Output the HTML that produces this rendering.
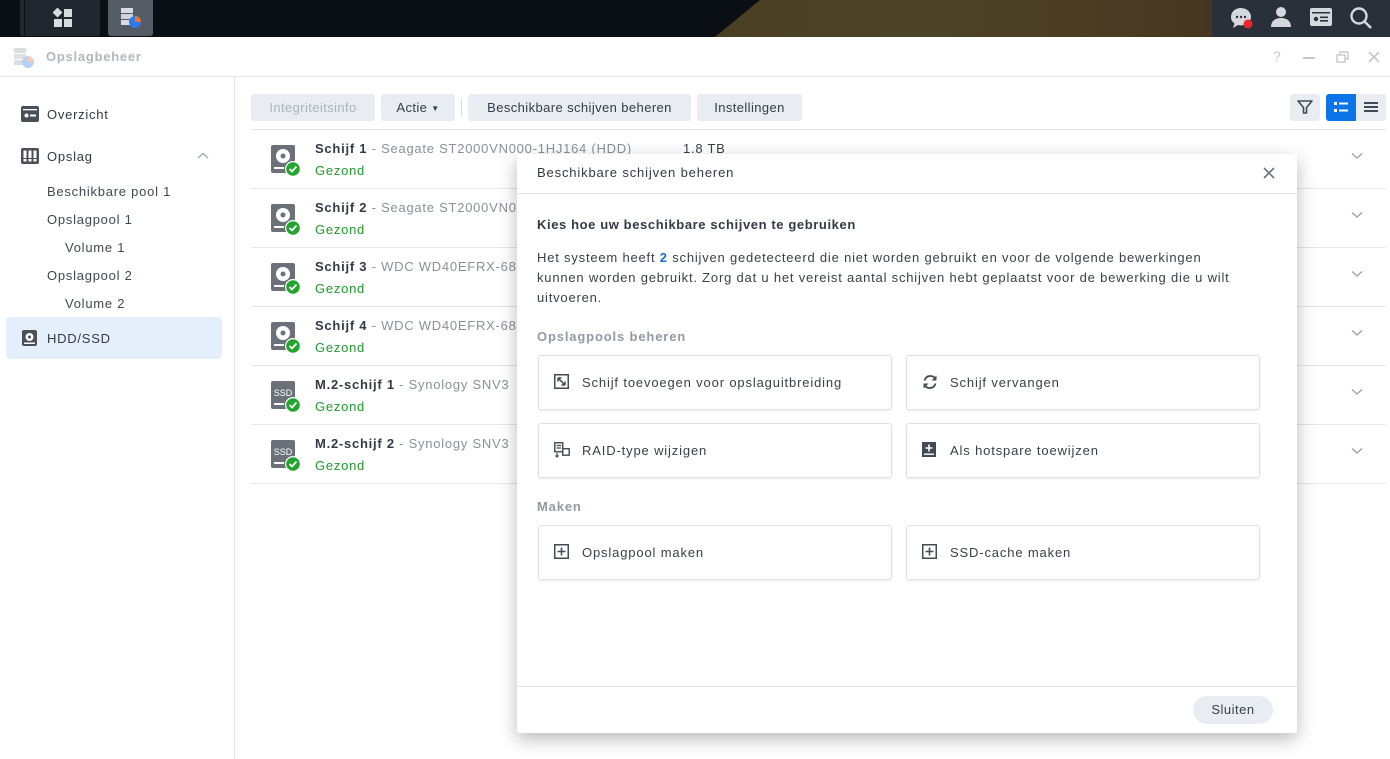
<!DOCTYPE html>
<html><head><meta charset="utf-8"><style>
*{box-sizing:border-box;margin:0;padding:0}
body{width:1390px;height:759px;overflow:hidden;font-family:"Liberation Sans",sans-serif;font-size:13px;color:#3a3f47;background:#fff;position:relative;letter-spacing:.75px}
.top{position:absolute;left:0;top:0;width:1390px;height:37px;background:#0a0e15}
.wall{position:absolute;left:715px;top:0;width:497px;height:37px;background:linear-gradient(90deg,#4a3f22,#4d4428 40%,#4a3c24 80%,#45361f);clip-path:polygon(45px 0,100% 0,100% 100%,0 100%)}
.tb{position:absolute;top:0;height:36px;border-radius:0 0 3px 3px}
.abs{position:absolute}
.side div{position:absolute;left:47px;font-size:13px;color:#414751}
.row{position:absolute;left:251px;width:1135px;height:59px;border-bottom:1px solid #e3e6ea}
.row .t{position:absolute;left:64px;top:11px;font-size:13px;white-space:nowrap}
.row b{color:#333a44}
.row .m{color:#8a9099}
.row .g{position:absolute;left:64px;top:33px;color:#1f9a2a;font-size:13px}
.row .ic{position:absolute;left:20px;top:15px}
.row .chev{position:absolute;left:1100px;top:22px}
.btn{position:absolute;top:94px;height:27px;background:#e9edf2;border-radius:3px;font-size:13px;line-height:27px;text-align:center;color:#353b44;letter-spacing:.4px}
.modal{position:absolute;left:517px;top:154px;width:780px;height:579px;background:#fff;box-shadow:0 6px 18px rgba(0,0,0,.28);border-radius:2px;letter-spacing:.85px}
.card{position:absolute;width:354px;height:55px;border:1px solid #dde1e6;border-radius:3px;box-shadow:0 1px 2px rgba(0,0,0,.08);font-size:13px;color:#3a3f47}
.card span{position:absolute;left:43px;top:19px}
.card svg{position:absolute;left:15px;top:18px}
</style></head><body>
<div class="top"></div>
<div class="wall"></div>
<div class="tb" style="left:20px;width:80px;background:#22272f"></div>
<div class="abs" style="left:24px;top:0;width:1px;height:36px;background:#0e1218"></div>
<svg class="abs" style="left:53px;top:8px" width="20" height="20"><rect x="1" y="1" width="7" height="7" transform="rotate(45 4.5 4.5)" fill="#d8dbe0"/><rect x="11" y="1" width="8" height="8" fill="#d8dbe0"/><rect x="1" y="11" width="8" height="8" fill="#d8dbe0"/><rect x="11" y="11" width="8" height="8" fill="#d8dbe0"/></svg>
<div class="tb" style="left:108px;width:45px;background:#555b64"></div>
<svg class="abs" style="left:119px;top:6px" width="24" height="24"><rect x="2" y="2" width="12" height="5" fill="#d8dbe0"/><rect x="2" y="8" width="12" height="5" fill="#cfd3d8"/><rect x="2" y="14" width="12" height="5" fill="#d8dbe0"/><circle cx="16" cy="16" r="6" fill="#2d7be6"/><path d="M16 16V10A6 6 0 0 1 22 16Z" fill="#f07030"/></svg>
<div class="abs" style="left:1212px;top:0;width:178px;height:37px;background:#2a3039"></div>
<svg class="abs" style="left:1229px;top:6px" width="26" height="24"><path d="M12 2C6 2 2 6 2 11c0 3 1.5 5 3.5 6.5L4 22l5-3c1 .3 2 .4 3 .4 6 0 10-4 10-8.5S18 2 12 2z" fill="#d5d8dc"/><circle cx="8" cy="11" r="1.2" fill="#2a3039"/><circle cx="12" cy="11" r="1.2" fill="#2a3039"/><circle cx="16" cy="11" r="1.2" fill="#2a3039"/><circle cx="19" cy="18" r="4.5" fill="#e8262c"/></svg>
<svg class="abs" style="left:1270px;top:6px" width="22" height="22"><circle cx="11" cy="6" r="5" fill="#d5d8dc"/><path d="M1 21c0-6 4-9 10-9s10 3 10 9z" fill="#d5d8dc"/></svg>
<svg class="abs" style="left:1309px;top:7px" width="24" height="20"><rect x="1" y="1" width="22" height="18" rx="2" fill="#d5d8dc"/><rect x="3" y="5" width="18" height="1.5" fill="#2a3039"/><circle cx="7" cy="12" r="2.2" fill="#2a3039"/><rect x="11" y="9.5" width="8" height="1.6" fill="#2a3039"/><rect x="11" y="13" width="8" height="1.6" fill="#2a3039"/></svg>
<svg class="abs" style="left:1349px;top:6px" width="24" height="24"><circle cx="10" cy="10" r="7.5" fill="none" stroke="#d5d8dc" stroke-width="2.4"/><path d="M15.5 15.5L22 22" stroke="#d5d8dc" stroke-width="2.6"/></svg>

<div class="abs" style="left:0;top:37px;width:1390px;height:40px;border-bottom:1px solid #e2e5e9;background:#fff"></div>
<svg class="abs" style="left:12px;top:46px" width="24" height="24" opacity=".45"><rect x="2" y="2" width="12" height="5" fill="#b0b5bc"/><rect x="2" y="8" width="12" height="5" fill="#b8bdc3"/><rect x="2" y="14" width="12" height="5" fill="#b0b5bc"/><circle cx="16" cy="16" r="6" fill="#5a9be9"/><path d="M16 16V10A6 6 0 0 1 22 16Z" fill="#f09060"/></svg>
<div class="abs" style="left:46px;top:49px;font-weight:bold;color:#b3b7bd;font-size:13px">Opslagbeheer</div>
<div class="abs" style="left:1273px;top:48px;color:#c4c8cd;font-size:14px">?</div>
<div class="abs" style="left:1303px;top:57px;width:12px;height:1.5px;background:#c4c8cd"></div>
<svg class="abs" style="left:1336px;top:51px" width="13" height="12"><rect x="1" y="4" width="8" height="7" fill="none" stroke="#c4c8cd" stroke-width="1.4"/><path d="M4 4V1h8v7H9" fill="none" stroke="#c4c8cd" stroke-width="1.4"/></svg>
<svg class="abs" style="left:1368px;top:51px" width="12" height="12"><path d="M1 1L11 11M11 1L1 11" stroke="#c4c8cd" stroke-width="1.6"/></svg>

<div class="abs" style="left:234px;top:77px;width:1px;height:682px;background:#e2e5e9"></div>
<svg class="abs" style="left:21px;top:106px" width="18" height="16"><rect x="0" y="0" width="18" height="16" rx="2" fill="#4a5059"/><rect x="2" y="3" width="14" height="1.3" fill="#fff"/><circle cx="5.5" cy="9.5" r="2" fill="#fff"/><rect x="9" y="8.5" width="6" height="2" fill="#fff"/></svg>
<div class="abs" style="left:47px;top:107px;color:#333a44">Overzicht</div>
<svg class="abs" style="left:21px;top:148px" width="18" height="16"><rect x="0" y="0" width="18" height="16" rx="2" fill="#4a5059"/><rect x="2.5" y="2.5" width="3" height="11" fill="#fff"/><rect x="7.5" y="2.5" width="3" height="11" fill="#fff"/><rect x="12.5" y="2.5" width="3" height="11" fill="#fff"/><rect x="2.5" y="10" width="13" height="1" fill="#4a5059"/></svg>
<div class="abs" style="left:47px;top:149px;color:#333a44">Opslag</div>
<svg class="abs" style="left:197px;top:152px" width="12" height="8"><path d="M1 6L6 1.5L11 6" fill="none" stroke="#a0a6ad" stroke-width="1.3"/></svg>
<div class="side">
<div style="top:184px">Beschikbare pool 1</div>
<div style="top:212px">Opslagpool 1</div>
<div style="top:240px;left:65px">Volume 1</div>
<div style="top:268px">Opslagpool 2</div>
<div style="top:296px;left:65px">Volume 2</div>
</div>
<div class="abs" style="left:6px;top:317px;width:216px;height:42px;background:#e4effb;border-radius:4px"></div>
<svg class="abs" style="left:22px;top:330px" width="15" height="16"><rect x="0" y="0" width="15" height="16" rx="2" fill="#4a5059"/><circle cx="7.5" cy="7" r="4" fill="#fff"/><circle cx="7.5" cy="7" r="1.5" fill="#4a5059"/><rect x="2" y="12.5" width="11" height="1.5" fill="#fff"/></svg>
<div class="abs" style="left:47px;top:331px;color:#333a44">HDD/SSD</div>

<div class="btn" style="left:251px;width:124px;color:#aeb3ba">Integriteitsinfo</div>
<div class="btn" style="left:381px;width:74px">Actie <span style="font-size:8px;vertical-align:1px">▼</span></div>
<div class="abs" style="left:461px;top:98px;width:1px;height:19px;background:#d8dce1"></div>
<div class="btn" style="left:468px;width:223px">Beschikbare schijven beheren</div>
<div class="btn" style="left:697px;width:105px">Instellingen</div>
<div class="btn" style="left:1290px;width:30px"></div>
<svg class="abs" style="left:1297px;top:99px" width="16" height="16"><path d="M1 2h14L9.5 8.5V14h-3V8.5z" fill="none" stroke="#444a53" stroke-width="1.6" stroke-linejoin="round"/></svg>
<div class="btn" style="left:1326px;width:60px"></div>
<div class="abs" style="left:1326px;top:94px;width:30px;height:27px;background:#0a74e8;border-radius:3px 0 0 3px"></div>
<svg class="abs" style="left:1333px;top:100px" width="16" height="14"><rect x="1" y="2" width="3" height="3" fill="#fff"/><rect x="6" y="2.5" width="9" height="2" fill="#fff"/><rect x="1" y="9" width="3" height="3" fill="#fff"/><rect x="6" y="9.5" width="9" height="2" fill="#fff"/></svg>
<svg class="abs" style="left:1364px;top:101px" width="14" height="12"><rect x="0" y="1" width="14" height="2" fill="#444a53"/><rect x="0" y="5" width="14" height="2" fill="#444a53"/><rect x="0" y="9" width="14" height="2" fill="#444a53"/></svg>
<div class="abs" style="left:251px;top:129px;width:1135px;height:1px;background:#dfe3e7"></div>

<div class="row" style="top:130px"><svg class="ic" width="30" height="32"><rect x="0" y="0" width="24" height="28" rx="2" fill="#6b7079"/><circle cx="12" cy="11" r="7" fill="#fff"/><circle cx="12" cy="11" r="2.5" fill="#6b7079"/><rect x="3" y="22" width="10" height="2" fill="#fff"/><circle cx="22" cy="24" r="8" fill="#fff"/><circle cx="22" cy="24" r="6.8" fill="#22a52e"/><path d="M18.5 24l2.5 2.5 4.5-5" fill="none" stroke="#fff" stroke-width="1.8"/></svg><div class="t"><b>Schijf 1</b> <span class="m">- Seagate ST2000VN000-1HJ164 (HDD)</span><span style="position:absolute;left:368px;color:#3a3f47">1.8 TB</span></div><div class="g">Gezond</div><svg class="chev" width="12" height="8"><path d="M1 1.5L6 6l5-4.5" fill="none" stroke="#9aa0a7" stroke-width="1.3"/></svg></div>
<div class="row" style="top:189px"><svg class="ic" width="30" height="32"><rect x="0" y="0" width="24" height="28" rx="2" fill="#6b7079"/><circle cx="12" cy="11" r="7" fill="#fff"/><circle cx="12" cy="11" r="2.5" fill="#6b7079"/><rect x="3" y="22" width="10" height="2" fill="#fff"/><circle cx="22" cy="24" r="8" fill="#fff"/><circle cx="22" cy="24" r="6.8" fill="#22a52e"/><path d="M18.5 24l2.5 2.5 4.5-5" fill="none" stroke="#fff" stroke-width="1.8"/></svg><div class="t"><b>Schijf 2</b> <span class="m">- Seagate ST2000VN0</span></div><div class="g">Gezond</div><svg class="chev" width="12" height="8"><path d="M1 1.5L6 6l5-4.5" fill="none" stroke="#9aa0a7" stroke-width="1.3"/></svg></div>
<div class="row" style="top:248px"><svg class="ic" width="30" height="32"><rect x="0" y="0" width="24" height="28" rx="2" fill="#6b7079"/><circle cx="12" cy="11" r="7" fill="#fff"/><circle cx="12" cy="11" r="2.5" fill="#6b7079"/><rect x="3" y="22" width="10" height="2" fill="#fff"/><circle cx="22" cy="24" r="8" fill="#fff"/><circle cx="22" cy="24" r="6.8" fill="#22a52e"/><path d="M18.5 24l2.5 2.5 4.5-5" fill="none" stroke="#fff" stroke-width="1.8"/></svg><div class="t"><b>Schijf 3</b> <span class="m">- WDC WD40EFRX-68</span></div><div class="g">Gezond</div><svg class="chev" width="12" height="8"><path d="M1 1.5L6 6l5-4.5" fill="none" stroke="#9aa0a7" stroke-width="1.3"/></svg></div>
<div class="row" style="top:307px"><svg class="ic" width="30" height="32"><rect x="0" y="0" width="24" height="28" rx="2" fill="#6b7079"/><circle cx="12" cy="11" r="7" fill="#fff"/><circle cx="12" cy="11" r="2.5" fill="#6b7079"/><rect x="3" y="22" width="10" height="2" fill="#fff"/><circle cx="22" cy="24" r="8" fill="#fff"/><circle cx="22" cy="24" r="6.8" fill="#22a52e"/><path d="M18.5 24l2.5 2.5 4.5-5" fill="none" stroke="#fff" stroke-width="1.8"/></svg><div class="t"><b>Schijf 4</b> <span class="m">- WDC WD40EFRX-68</span></div><div class="g">Gezond</div><svg class="chev" width="12" height="8"><path d="M1 1.5L6 6l5-4.5" fill="none" stroke="#9aa0a7" stroke-width="1.3"/></svg></div>
<div class="row" style="top:366px"><svg class="ic" width="30" height="32"><rect x="0" y="0" width="24" height="28" rx="2" fill="#6b7079"/><text x="12" y="15" font-size="9" fill="#fff" text-anchor="middle" font-family="Liberation Sans" letter-spacing="0">SSD</text><rect x="3" y="22" width="10" height="2" fill="#fff"/><circle cx="22" cy="24" r="8" fill="#fff"/><circle cx="22" cy="24" r="6.8" fill="#22a52e"/><path d="M18.5 24l2.5 2.5 4.5-5" fill="none" stroke="#fff" stroke-width="1.8"/></svg><div class="t"><b>M.2-schijf 1</b> <span class="m">- Synology SNV3</span></div><div class="g">Gezond</div><svg class="chev" width="12" height="8"><path d="M1 1.5L6 6l5-4.5" fill="none" stroke="#9aa0a7" stroke-width="1.3"/></svg></div>
<div class="row" style="top:425px"><svg class="ic" width="30" height="32"><rect x="0" y="0" width="24" height="28" rx="2" fill="#6b7079"/><text x="12" y="15" font-size="9" fill="#fff" text-anchor="middle" font-family="Liberation Sans" letter-spacing="0">SSD</text><rect x="3" y="22" width="10" height="2" fill="#fff"/><circle cx="22" cy="24" r="8" fill="#fff"/><circle cx="22" cy="24" r="6.8" fill="#22a52e"/><path d="M18.5 24l2.5 2.5 4.5-5" fill="none" stroke="#fff" stroke-width="1.8"/></svg><div class="t"><b>M.2-schijf 2</b> <span class="m">- Synology SNV3</span></div><div class="g">Gezond</div><svg class="chev" width="12" height="8"><path d="M1 1.5L6 6l5-4.5" fill="none" stroke="#9aa0a7" stroke-width="1.3"/></svg></div>

<div class="modal">
<div class="abs" style="left:20px;top:11px;font-size:13px;color:#333a44">Beschikbare schijven beheren</div>
<svg class="abs" style="left:746px;top:13px" width="12" height="12"><path d="M1 1L11 11M11 1L1 11" stroke="#6b7079" stroke-width="1.6"/></svg>
<div class="abs" style="left:0;top:39px;width:780px;height:1px;background:#e3e6ea"></div>
<div class="abs" style="left:20px;top:63px;font-weight:bold;font-size:13px;color:#333a44;letter-spacing:.6px">Kies hoe uw beschikbare schijven te gebruiken</div>
<div class="abs" style="left:20px;top:94px;width:705px;line-height:20px;font-size:13px;color:#3a3f47;letter-spacing:.8px">Het systeem heeft <b style="color:#1a6fd1">2</b> schijven gedetecteerd die niet worden gebruikt en voor de volgende bewerkingen kunnen worden gebruikt. Zorg dat u het vereist aantal schijven hebt geplaatst voor de bewerking die u wilt uitvoeren.</div>
<div class="abs" style="left:20px;top:175px;font-weight:bold;color:#9399a3">Opslagpools beheren</div>
<div class="card" style="left:21px;top:201px"><svg width="15" height="15"><rect x=".75" y=".75" width="13.5" height="13.5" fill="none" stroke="#444a53" stroke-width="1.5"/><path d="M4 4l7 7M4 4v3.5M4 4h3.5M11 11H7.5M11 11V7.5" stroke="#444a53" stroke-width="1.5" fill="none"/></svg><span>Schijf toevoegen voor opslaguitbreiding</span></div>
<div class="card" style="left:389px;top:201px"><svg width="16" height="16"><path d="M2.5 6.5A6 6 0 0 1 13.5 5M13.5 9.5A6 6 0 0 1 2.5 11" fill="none" stroke="#444a53" stroke-width="1.8"/><path d="M14.5 1.5v5h-5z" fill="#444a53"/><path d="M1.5 14.5v-5h5z" fill="#444a53"/></svg><span>Schijf vervangen</span></div>
<div class="card" style="left:21px;top:269px"><svg width="16" height="16"><rect x=".75" y=".75" width="8" height="9" fill="none" stroke="#444a53" stroke-width="1.4"/><path d="M2.5 3.5h4.5M2.5 6h4.5" stroke="#444a53" stroke-width="1.2"/><rect x="8.7" y="6.7" width="6.5" height="6.5" fill="none" stroke="#444a53" stroke-width="1.4"/><path d="M3 11v4M1.5 13.5L3 15l1.5-1.5" stroke="#444a53" stroke-width="1.2" fill="none"/></svg><span>RAID-type wijzigen</span></div>
<div class="card" style="left:389px;top:269px"><svg width="15" height="16"><rect x="0" y="0" width="14" height="15" fill="#444a53"/><path d="M7 2.5v7M3.5 6h7" stroke="#fff" stroke-width="1.6"/><rect x="2" y="11.5" width="10" height="1.4" fill="#fff"/></svg><span>Als hotspare toewijzen</span></div>
<div class="abs" style="left:20px;top:345px;font-weight:bold;color:#9399a3">Maken</div>
<div class="card" style="left:21px;top:371px"><svg width="15" height="15"><rect x=".75" y=".75" width="13.5" height="13.5" fill="none" stroke="#444a53" stroke-width="1.5"/><path d="M7.5 3.5v8M3.5 7.5h8" stroke="#444a53" stroke-width="1.6"/></svg><span>Opslagpool maken</span></div>
<div class="card" style="left:389px;top:371px"><svg width="15" height="15"><rect x=".75" y=".75" width="13.5" height="13.5" fill="none" stroke="#444a53" stroke-width="1.5"/><path d="M7.5 3.5v8M3.5 7.5h8" stroke="#444a53" stroke-width="1.6"/></svg><span>SSD-cache maken</span></div>
<div class="abs" style="left:0;top:532px;width:780px;height:1px;background:#e3e6ea"></div>
<div class="abs" style="left:676px;top:542px;width:80px;height:28px;border-radius:14px;background:#e9edf2;text-align:center;line-height:28px;color:#3a3f47;letter-spacing:.5px">Sluiten</div>
</div>
</body></html>
